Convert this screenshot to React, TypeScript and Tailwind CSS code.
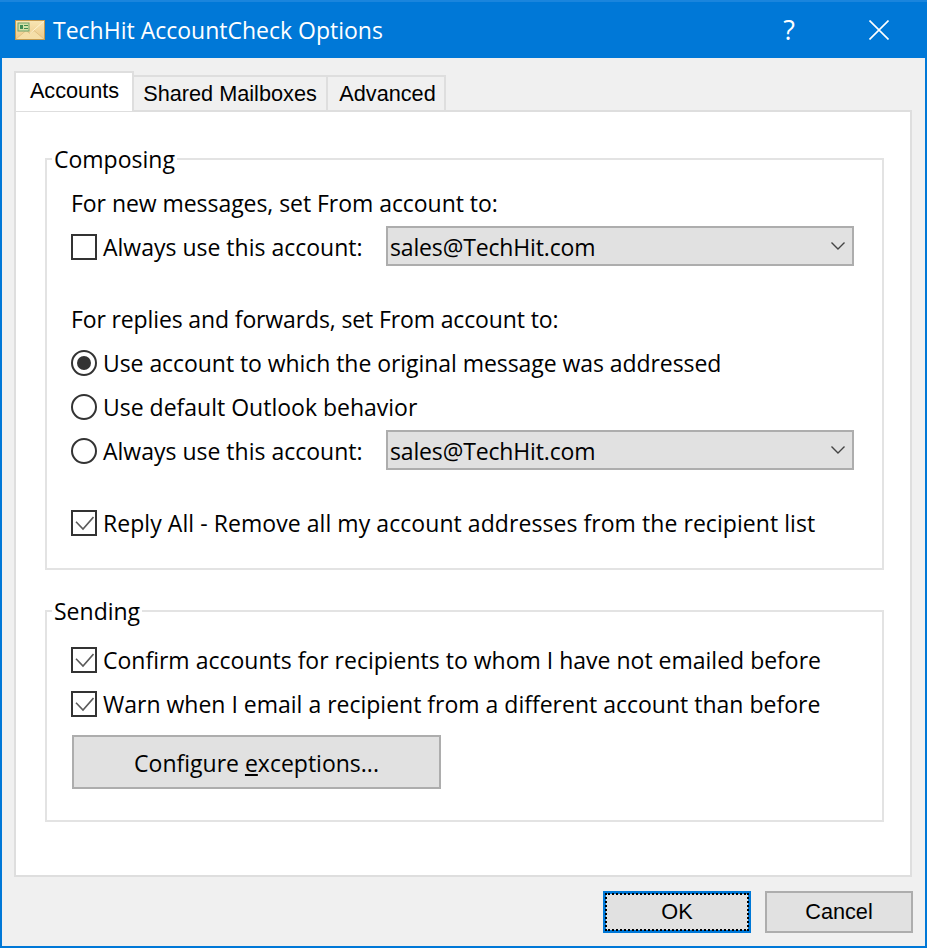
import React from 'react'

const ui = "font-['Open_Sans',sans-serif]"
const classic = "font-['Liberation_Sans',Arial,sans-serif]"

const Check = ({ checked = false }: { checked?: boolean }) => (
  <div className="w-[26px] h-[26px] shrink-0 border-2 border-[#333333] bg-white flex items-center justify-center">
    {checked && (
      <svg width="20" height="20" viewBox="0 0 20 20" fill="none">
        <path d="M2 8.7 L9 16 L19.5 4" stroke="#5a5a5a" strokeWidth="1.6" />
      </svg>
    )}
  </div>
)

const Radio = ({ checked = false }: { checked?: boolean }) => (
  <div className="w-[26px] h-[26px] shrink-0 rounded-full border-2 border-[#333333] bg-white flex items-center justify-center">
    {checked && <div className="w-[14px] h-[14px] rounded-full bg-[#333333]" />}
  </div>
)

const Combo = () => (
  <div className="w-[468px] h-[40px] ml-auto mr-[28px] -mt-[2px] bg-[#e1e1e1] border-2 border-[#adadad] flex items-center justify-between pl-[2px] pr-[7px]">
    <span className="pt-[2px] tracking-[-0.15px]">sales@TechHit.com</span>
    <svg width="14" height="8" viewBox="0 0 14 8" fill="none">
      <path d="M0.5 0.5 L7 7 L13.5 0.5" stroke="#444444" strokeWidth="1.4" />
    </svg>
  </div>
)

const Row = ({ children }: { children: React.ReactNode }) => (
  <div className="h-[44px] flex items-center gap-[6px] whitespace-nowrap">{children}</div>
)

export default function App() {
  return (
    <div className={`w-[928px] h-[948px] bg-white ${ui} text-[23px] text-black overflow-hidden`}>
      <div className="w-[927px] h-[948px] border-x-2 border-b-2 border-[#0078d7] bg-[#f0f0f0] flex flex-col">
        {/* title bar */}
        <div className="h-[58px] shrink-0 -mx-[2px] bg-[#0078d7] border-t-2 border-[#1a85dd] flex items-center text-white">
          <svg className="ml-[15px]" width="30" height="20" viewBox="0 0 30 20">
            <defs>
              <linearGradient id="env" x1="0" y1="0" x2="0" y2="1">
                <stop offset="0" stopColor="#f8e6b4" />
                <stop offset="1" stopColor="#ecc987" />
              </linearGradient>
            </defs>
            <rect x="0.5" y="0.5" width="29" height="19" fill="url(#env)" stroke="#c39a4f" />
            <path d="M1 19 L11 10.5 L15 13.5 L19 10.5 L29 19" fill="#f5dfa8" stroke="#e0c184" />
            <path d="M15 13.5 L29 1" fill="none" stroke="#fff3cf" />
            <rect x="3" y="3" width="11" height="8" fill="#d4e2a8" stroke="#6ea26a" />
            <rect x="5" y="5" width="3" height="4" fill="#3f8a52" />
            <rect x="9" y="5" width="4" height="1" fill="#3f8a52" />
            <rect x="9" y="8" width="4" height="1" fill="#3f8a52" />
          </svg>
          <span className="ml-[8px] text-[23px]">TechHit AccountCheck Options</span>
          <span className="ml-auto mr-[74px] text-[27px]">?</span>
          <svg className="mr-[38px]" width="20" height="20" viewBox="0 0 20 20" fill="none">
            <path d="M0.5 0.5 L19.5 19.5 M19.5 0.5 L0.5 19.5" stroke="#ffffff" strokeWidth="1.6" />
          </svg>
        </div>

        {/* tabs */}
        <div className={`h-[52px] shrink-0 pl-[12px] flex items-end ${classic} text-[21.7px]`}>
          <div className="w-[120px] h-[40px] -mb-[1px] z-10 bg-white border-x-2 border-t-2 border-[#dedede] flex items-center justify-center pb-[1px] pl-[1px]">
            Accounts
          </div>
          <div className="w-[194px] h-[35px] bg-[#f0f0f0] border-r-2 border-t-2 border-[#dedede] flex items-center justify-center pt-[1px]">
            Shared Mailboxes
          </div>
          <div className="w-[118px] h-[35px] bg-[#f0f0f0] border-r-2 border-t-2 border-[#dedede] flex items-center justify-center pt-[1px] pl-[3px]">
            Advanced
          </div>
        </div>

        {/* panel */}
        <div className="ml-[12px] w-[898px] h-[767px] shrink-0 bg-white border-2 border-[#dedede] pl-[29px] pt-[31px]">
          <fieldset className="w-[839px] h-[427px] border-2 border-[#e3e3e3] pl-[24px] pt-[6px]">
            <legend className="ml-[-19px] px-[2px] h-[32px] leading-[32px]">Composing</legend>
            <Row>
              <span className="tracking-[-0.05px]">For new messages, set From account to:</span>
            </Row>
            <Row>
              <Check />
              <span>Always use this account:</span>
              <Combo />
            </Row>
            <div className="h-[28px]" />
            <Row>
              <span className="tracking-[-0.13px]">For replies and forwards, set From account to:</span>
            </Row>
            <Row>
              <Radio checked />
              <span className="tracking-[-0.06px]">Use account to which the original message was addressed</span>
            </Row>
            <Row>
              <Radio />
              <span>Use default Outlook behavior</span>
            </Row>
            <Row>
              <Radio />
              <span>Always use this account:</span>
              <Combo />
            </Row>
            <div className="h-[28px]" />
            <Row>
              <Check checked />
              <span className="tracking-[0.06px]">Reply All - Remove all my account addresses from the recipient list</span>
            </Row>
          </fieldset>

          <fieldset className="mt-[25px] w-[839px] h-[227px] border-2 border-[#e3e3e3] pl-[24px] pt-[11px]">
            <legend className="ml-[-19px] px-[2px] h-[32px] leading-[32px]">Sending</legend>
            <Row>
              <Check checked />
              <span>Confirm accounts for recipients to whom I have not emailed before</span>
            </Row>
            <Row>
              <Check checked />
              <span>Warn when I email a recipient from a different account than before</span>
            </Row>
            <button className="mt-[9px] ml-[1px] w-[369px] h-[54px] bg-[#e1e1e1] border-2 border-[#adadad] flex items-center justify-center pt-[3px]">
              <span>
                Configure <span className="underline">e</span>xceptions...
              </span>
            </button>
          </fieldset>
        </div>

        {/* footer */}
        <div className={`flex justify-end gap-[14px] pt-[14px] pr-[12px] ${classic} text-[21.7px]`}>
          <div className="w-[148px] h-[42px] bg-[#e1e1e1] border-[3px] border-[#0078d7] flex items-center justify-center pt-[1px] outline-dotted outline-2 -outline-offset-[4px] outline-black">
            OK
          </div>
          <div className="w-[148px] h-[42px] bg-[#e1e1e1] border-2 border-[#adadad] flex items-center justify-center pt-[1px]">
            Cancel
          </div>
        </div>
      </div>
    </div>
  )
}
